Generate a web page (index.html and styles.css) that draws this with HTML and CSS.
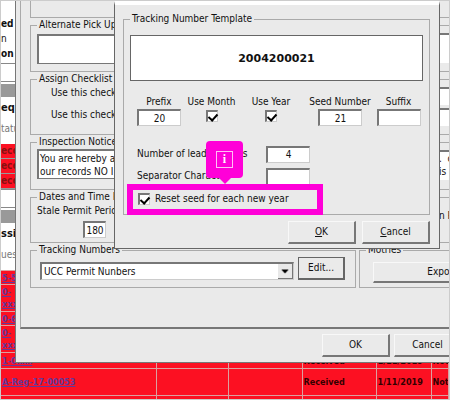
FILE: index.html
```
<!DOCTYPE html>
<html lang="en">
<head>
<meta charset="utf-8">
<title>Tracking Number Template</title>
<link rel="stylesheet" href="styles.css">
</head>
<body>
<main class="desktop">
  <section class="records">
    <div class="record-head"><b>ed</b><span>n</span><b>on</b></div>
    <div class="rule"></div>
    <div class="bar"></div>
    <h2 class="record-title">eq</h2>
    <p class="record-sub">tatu</p>
    <div class="status-row">ece</div>
    <div class="status-row">ece</div>
    <div class="status-row">ece</div>
    <div class="rule"></div>
    <div class="bar"></div>
    <h2 class="record-title">ssi</h2>
    <p class="record-sub">ues</p>
    <table class="permits">
      <colgroup><col class="col-id"><col class="col-a"><col class="col-b"><col class="col-b"><col class="col-date"><col></colgroup>
      <tr class="single"><td><a href="#">5-5</a></td><td></td><td></td><td></td><td></td><td></td></tr>
      <tr class="double"><td><a href="#">0-<br>xxx</a></td><td></td><td></td><td></td><td></td><td></td></tr>
      <tr class="single"><td><a href="#">0-6</a></td><td></td><td></td><td></td><td></td><td></td></tr>
      <tr class="double"><td><a href="#">0-<br>xxx</a></td><td></td><td></td><td></td><td></td><td></td></tr>
      <tr class="medium"><td><a href="#">1-0xxx</a></td><td></td><td></td><td>Received</td><td>1/11/2019</td><td>Not</td></tr>
      <tr class="double"><td><a href="#">A-Reg-17-00053</a></td><td></td><td></td><td>Received</td><td>1/11/2019</td><td>Not</td></tr>
      <tr class="single"><td></td><td></td><td></td><td></td><td></td><td></td></tr>
    </table>
  </section>

  <section class="settings">
    <div class="tab-page">
      <div class="column">
        <div class="group top-group"></div>
        <fieldset class="group alternate">
          <legend>Alternate Pick Up</legend>
          <textarea aria-label="Alternate Pick Up"></textarea>
        </fieldset>
        <fieldset class="group assign">
          <legend>Assign Checklist</legend>
          <p>Use this check</p>
          <p>Use this check</p>
        </fieldset>
        <fieldset class="group inspection">
          <legend>Inspection Notice</legend>
          <textarea aria-label="Inspection Notice">You are hereby a
our records NO I</textarea>
        </fieldset>
        <fieldset class="group dates">
          <legend>Dates and Time P</legend>
          <label for="stale">Stale Permit Perio</label>
          <input id="stale" value="180">
        </fieldset>
        <fieldset class="group tracking">
          <legend>Tracking Numbers</legend>
          <div class="tracking-row">
            <div class="combo">
              <select aria-label="Tracking Numbers"><option>UCC Permit Nunbers</option></select>
              <svg class="arrow" viewBox="0 0 15 15" aria-hidden="true"><path d="M4 6h7v1h-1v1H9v1H8v1H7V9H6V8H5V7H4z"/></svg>
            </div>
            <button class="edit" type="button">Edit...</button>
          </div>
        </fieldset>
      </div>
      <div class="column side">
        <div class="group top-group"></div>
        <div class="group plain alternate"><div class="pane"></div></div>
        <div class="group plain assign"><div class="pane"></div><div class="pane"></div></div>
        <div class="group plain inspection"><div class="pane clipped">. &nbsp;c<br>is c</div></div>
        <div class="group plain dates"><div class="clipped">n P</div></div>
        <fieldset class="group tracking">
          <legend>Motries</legend>
          <button class="export" type="button">Export</button>
        </fieldset>
      </div>
    </div>
    <div class="settings-actions">
      <button type="button">OK</button>
      <button type="button">Cancel</button>
    </div>
  </section>

  <section class="dialog" role="dialog" aria-label="Tracking Number Template">
    <fieldset class="group template">
      <legend>Tracking Number Template</legend>
      <output class="preview">2004200021</output>
      <div class="parts">
        <div class="part"><label for="prefix">Prefix</label><input id="prefix" value="20"></div>
        <div class="part"><label for="month">Use Month</label><input id="month" type="checkbox" checked></div>
        <div class="part"><label for="year">Use Year</label><input id="year" type="checkbox" checked></div>
        <div class="part"><label for="seed">Seed Number</label><input id="seed" value="21"></div>
        <div class="part"><label for="suffix">Suffix</label><input id="suffix" value=""></div>
      </div>
      <div class="line"><label for="zeros">Number of leading zeros</label><input id="zeros" value="4"></div>
      <div class="line"><label for="separator">Separator Character</label><input id="separator" value=""></div>
      <div class="line reset"><input id="reset" type="checkbox" checked><label for="reset">Reset seed for each new year</label></div>
    </fieldset>
    <div class="dialog-actions">
      <button type="button"><u>O</u>K</button>
      <button type="button"><u>C</u>ancel</button>
    </div>
  </section>

  <div class="highlight"></div>
  <div class="callout"><span>i</span></div>
</main>
</body>
</html>
```

FILE: styles.css
```
* { box-sizing: border-box; }

body {
  margin: 0;
  color: #111;
  font: 10px/14px "DejaVu Sans Condensed", "DejaVu Sans", sans-serif;
}

p, h2 { margin: 0; }

input, select, textarea, button {
  margin: 0;
  color: inherit;
  font: inherit;
}

.desktop {
  position: relative;
  height: 100vh;
  overflow: hidden;
  border: 1px solid #ccc;
  background: #fff;
}

/* Permit list behind the windows */
.record-head {
  display: flex;
  flex-direction: column;
  height: 62px;
  padding-top: 15px;
  line-height: 15px;
}

.rule {
  height: 19px;
  margin-bottom: 2px;
  border: 1px solid #888;
  border-width: 1px 0;
}

.bar { height: 13px; background: #999; }

.record-title {
  height: 22px;
  font-size: 11px;
  line-height: 22px;
}

.record-sub {
  height: 25px;
  color: #777;
  line-height: 20px;
}

.status-row {
  height: 15px;
  border-bottom: 1px solid #999;
  background: #fc1022;
  color: #811;
  font-weight: bold;
}

.permits {
  width: 100%;
  table-layout: fixed;
  border-collapse: collapse;
  background: #fc1022;
  color: #300;
  font-size: 9px;
  font-weight: bold;
}

.col-id { width: 155px; }
.col-a { width: 72px; }
.col-b { width: 74px; }
.col-date { width: 55px; }

.permits td {
  overflow: hidden;
  padding: 0 1px;
  border: 1px solid #dba0a0;
  border-left-width: 0;
  line-height: 12px;
  white-space: nowrap;
}

.permits a { color: #63389c; }
.single { height: 14px; }
.medium { height: 16px; }
.double { height: 27px; }

/* Settings window */
.settings {
  position: absolute;
  top: 0;
  left: 14px;
  right: -30px;
  border: solid #777;
  border-width: 0 0 1px 1px;
  background: #eaeaea;
}

.tab-page {
  display: flex;
  gap: 3px;
  height: 328px;
  margin-left: 4px;
  padding-left: 9px;
  border-bottom: 2px solid #777;
  border-left: 1px solid #aaa;
}

.column { flex: 0 0 326px; }
.column.side { flex: 1; }

.group {
  min-width: 0;
  margin: 0;
  padding: 0 6px;
  border: 1px solid #aaa;
}

.group legend {
  height: 14px;
  padding: 0 2px;
  white-space: nowrap;
}

.top-group { height: 17px; border-top: 0; }
.alternate { height: 54px; }
.assign { height: 63px; }
.inspection { height: 55px; }
.dates { height: 53px; }
.tracking { height: 45px; }

.plain {
  margin-top: 7px;
  padding-top: 7px;
}

.plain.alternate { height: 47px; }
.plain.assign { height: 56px; }
.plain.inspection { height: 48px; }
.plain.dates { height: 46px; }

.alternate textarea,
.inspection textarea {
  display: block;
  width: 100%;
  height: 30px;
  padding: 1px 1px;
  overflow: hidden;
  border: 1px solid #777;
  border-width: 2px 1px 1px 2px;
  background: #fff;
  line-height: 13px;
  resize: none;
}

.alternate textarea { margin-top: 2px; }

.assign p {
  height: 22px;
  padding-left: 14px;
}

.pane {
  height: 30px;
  border-top: 2px solid #777;
  background: #fff;
}

.plain.assign .pane {
  height: 18px;
  margin-bottom: 3px;
}

.clipped {
  padding-left: 73px;
  line-height: 13px;
  white-space: nowrap;
}

.plain.dates .clipped { padding-top: 4px; }

.dates label { display: block; }

input:not([type="checkbox"]) {
  width: 44px;
  height: 17px;
  padding: 0;
  border: 1px solid #ccc;
  border-top: 2px solid #777;
  border-left: 2px solid #777;
  background: #fff;
  text-align: center;
}

.dates input:not([type="checkbox"]) {
  display: block;
  width: 23px;
  margin: 3px 0 0 46px;
}

.tracking-row {
  display: flex;
  gap: 4px;
  padding-left: 3px;
}

.combo {
  display: flex;
  width: 254px;
  height: 18px;
  margin-top: 5px;
  border: 1px solid #ccc;
  border-top: 2px solid #777;
  border-left: 2px solid #777;
  background: #fff;
}

.combo select {
  flex: 1;
  min-width: 0;
  padding: 0 2px;
  border: 0;
  background: none;
  appearance: none;
}

.arrow {
  width: 15px;
  height: 15px;
  border: 1px solid #777;
  border-width: 0 1px 1px 0;
  background: #e8e8e8;
}

button {
  width: 68px;
  height: 23px;
  padding: 0;
  border: 1px solid #f8f8f8;
  border-right: 2px solid #777;
  border-bottom: 2px solid #777;
  background: #eaeaea;
}

.edit { width: 47px; border: 2px solid #666; border-width: 1px 2px 2px 1px; }

.export {
  width: 100%;
  min-width: 132px;
  height: 21px;
  margin: 5px 0 0 7px;
}

.settings-actions {
  display: flex;
  justify-content: flex-end;
  gap: 4px;
  padding: 5px 17px 5px 0;
}

/* Template dialog */
.dialog {
  position: absolute;
  top: 0;
  left: 113px;
  right: 9px;
  padding: 7px 9px 4px 8px;
  border: 1px solid #666;
  border-top: 4px solid #fff;
  background: #eaeaea;
}

.template { height: 203px; }

.preview {
  display: flex;
  align-items: center;
  justify-content: center;
  height: 46px;
  margin-top: 9px;
  padding-top: 2px;
  border: 1px solid #666;
  background: #fff;
  font-family: "DejaVu Sans", sans-serif;
  font-size: 11px;
  font-weight: bold;
}

.parts {
  display: grid;
  grid-template-columns: 58px 47px 72px 66px 51px;
  height: 52px;
  padding-top: 14px;
}

.part {
  display: flex;
  flex-direction: column;
  align-items: center;
  white-space: nowrap;
}

input[type="checkbox"] {
  width: 12px;
  height: 12px;
  border: 1px solid #ccc;
  border-top: 2px solid #777;
  border-left: 2px solid #777;
  background: #fff;
  appearance: none;
}

.part input[type="checkbox"] { margin-top: 1px; }

input[type="checkbox"]:checked::before {
  content: "";
  display: block;
  width: 4px;
  height: 7px;
  margin: 0 0 0 2px;
  border: solid #000;
  border-width: 0 2px 2px 0;
  transform: rotate(42deg);
}

.line {
  display: flex;
  align-items: center;
  justify-content: space-between;
  width: 180px;
  height: 22px;
}

.parts + .line { margin-top: 10px; }
.line label { padding-left: 7px; white-space: nowrap; }
.line.reset { justify-content: flex-start; height: 24px; padding-left: 8px; }
.line.reset label { padding-left: 5px; }

.dialog-actions {
  display: flex;
  justify-content: flex-end;
  gap: 6px;
  padding-top: 6px;
}

/* Annotation over the dialog */
.highlight {
  position: absolute;
  top: 183px;
  left: 126px;
  width: 196px;
  height: 31px;
  border: 6px solid #ff00d8;
}

.callout {
  position: absolute;
  top: 140px;
  left: 205px;
  display: grid;
  place-items: center;
  width: 37px;
  height: 37px;
  border-radius: 4px;
  background: #ff00d8;
  color: #fff;
}

.callout::after {
  content: "";
  position: absolute;
  top: 36px;
  border: 7px solid transparent;
  border-top-color: #ff00d8;
}

.callout span {
  width: 17px;
  height: 17px;
  border: 1px solid #ffc0f5;
  font: bold 12px/15px "Liberation Serif", serif;
  text-align: center;
}
```
